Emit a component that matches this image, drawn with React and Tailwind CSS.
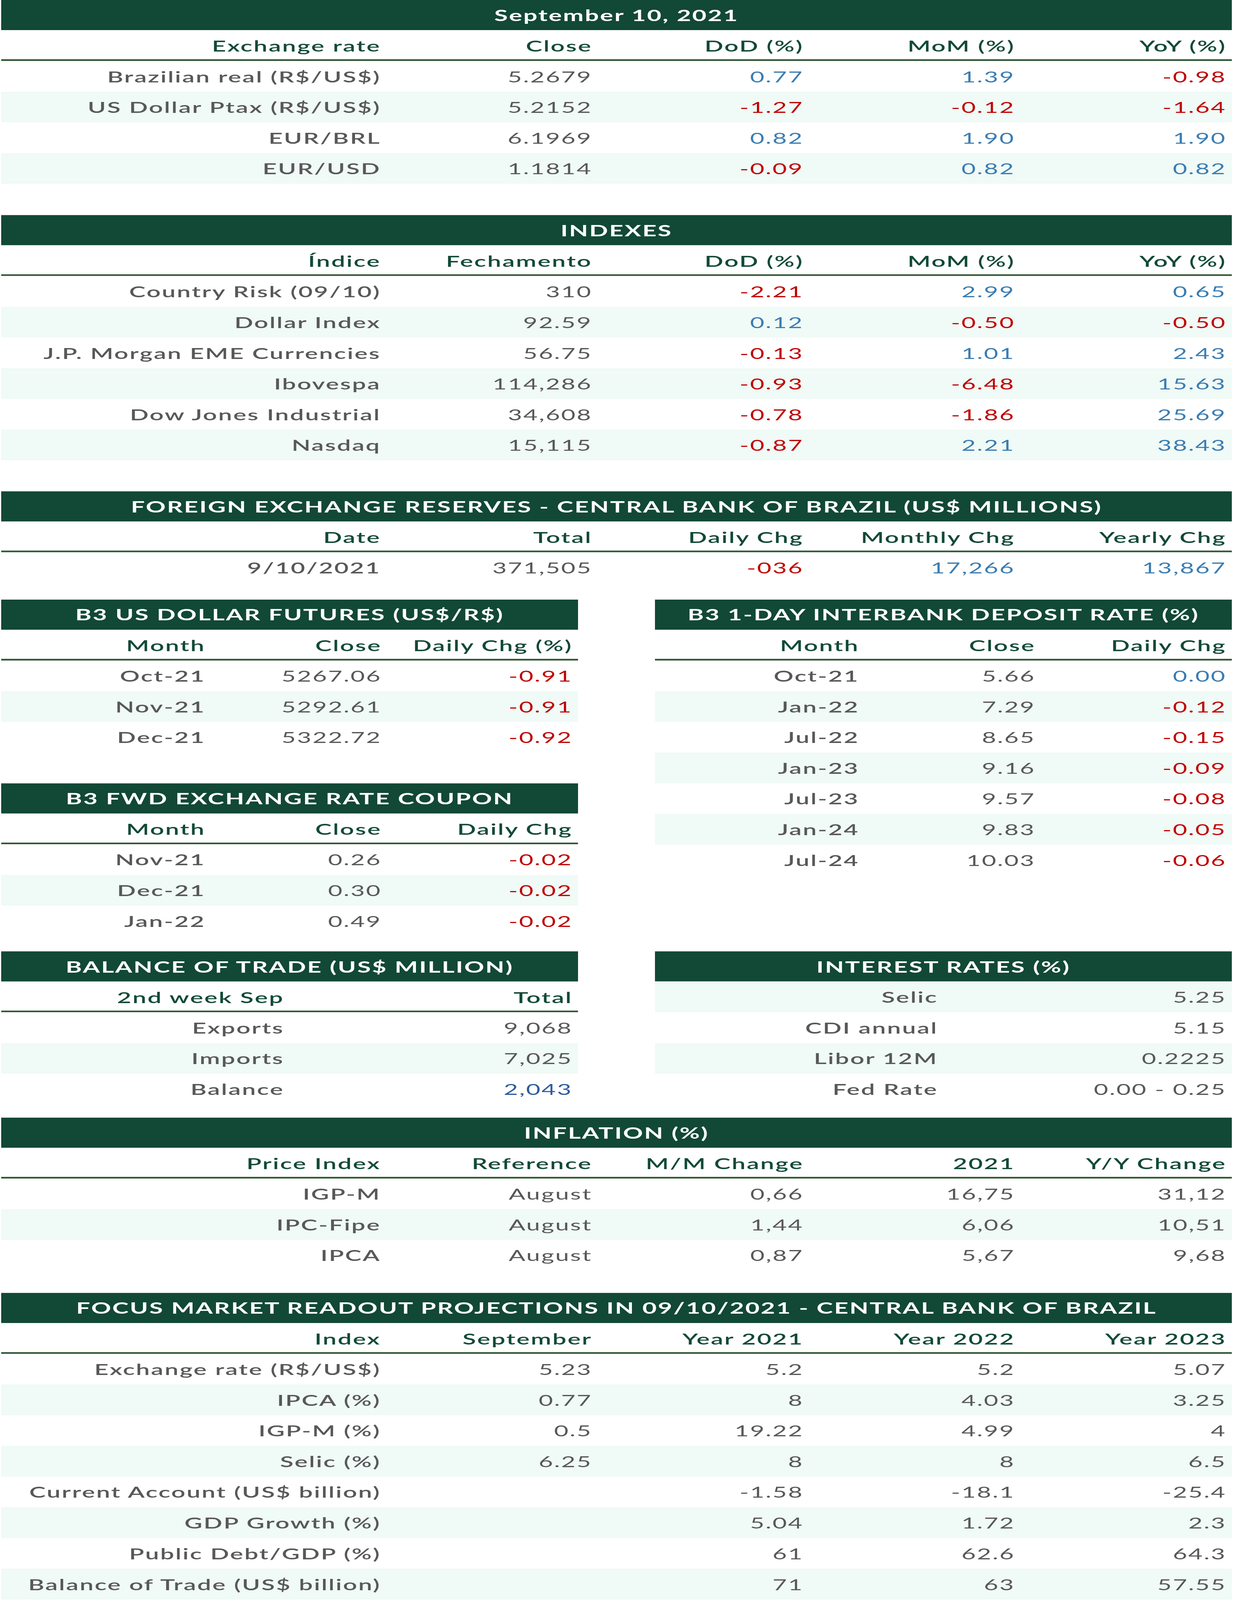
import React, { useEffect, useState } from 'react';

// the newsletter is drawn at this height
const PAGE_H = 6591;

// colours picked from the newsletter
const tones = {
  gray: 'text-[#58585a]',
  red: 'text-[#c00000]',
  blue: 'text-[#3b7db2]',
  navy: 'text-[#2f5c9c]',
};

const signTone = (v) => (v.trim().startsWith('-') ? 'red' : 'blue');

const Title = ({ children }) => (
  <div className="h-[124px] bg-[#124836] flex items-center justify-center text-white font-bold leading-none">
    {children}
  </div>
);

const Table = ({ title, cols, heads, rows, signed = [], className = '' }) => (
  <div className={className}>
    <Title>{title}</Title>
    {heads && (
      <div className={`grid ${cols} h-[127px] pt-[8px] border-b-[7px] border-[#2e5632]`}>
        {heads.map((h, i) => (
          <div key={i} className="flex items-center justify-end pr-[14px] font-semibold text-[#124a37] leading-none">
            {h}
          </div>
        ))}
      </div>
    )}
    {rows.map((row, r) => {
      // title row is row 1, header row 2, so even rows get the stripe
      const n = r + (heads ? 3 : 2);
      return (
        <div key={r} className={`grid ${cols} h-[126.5px] ${n % 2 === 0 ? 'bg-[#f0faf6]' : 'bg-white'}`}>
          {row.map((v, c) => {
            const tone = c === 0 ? 'gray' : typeof v === 'object' ? v.tone : signed.includes(c) && v ? signTone(v) : 'gray';
            const text = typeof v === 'object' ? v.v : v;
            return (
              <div
                key={c}
                className={`flex items-center justify-end pr-[14px] leading-none whitespace-nowrap ${tones[tone]} ${c === 0 ? 'font-semibold' : 'font-normal'}`}
              >
                {text}
              </div>
            );
          })}
        </div>
      );
    })}
  </div>
);

// keeps the whole sheet inside the window when the window is shorter than the sheet
const Fit = ({ children }) => {
  const [vh, setVh] = useState(PAGE_H);
  useEffect(() => {
    const update = () => setVh(window.innerHeight || PAGE_H);
    update();
    window.addEventListener('resize', update);
    return () => window.removeEventListener('resize', update);
  }, []);
  const s = Math.min(1, vh / PAGE_H);
  return (
    <div className="overflow-hidden" style={{ height: PAGE_H * s }}>
      <div className="origin-top" style={{ transform: `scaleY(${s})` }}>
        {children}
      </div>
    </div>
  );
};

const FIVE = 'grid-cols-[986px_1fr_1fr_1fr_1fr]';
const THREE = 'grid-cols-[537px_451px_1fr]';
const TWO = 'grid-cols-2';

export default function App() {
  return (
    <Fit>
      <div className="w-[3157px] h-[6591px] bg-white px-[3px] text-[63px] tracking-[0.05em] font-['Lato','Liberation_Sans',sans-serif]">
        <Table
          title="September 10, 2021"
          cols={FIVE}
          heads={['Exchange rate', 'Close', 'DoD (%)', 'MoM (%)', 'YoY (%)']}
          signed={[2, 3, 4]}
          rows={[
            ['Brazilian real (R$/US$)', '5.2679', '0.77', '1.39', '-0.98'],
            ['US Dollar Ptax (R$/US$)', '5.2152', '-1.27', '-0.12', '-1.64'],
            ['EUR/BRL', '6.1969', '0.82', '1.90', '1.90'],
            ['EUR/USD', '1.1814', '-0.09', '0.82', '0.82'],
          ]}
        />

        <Table
          className="mt-[129px]"
          title="INDEXES"
          cols={FIVE}
          heads={['Índice', 'Fechamento', 'DoD (%)', 'MoM (%)', 'YoY (%)']}
          signed={[2, 3, 4]}
          rows={[
            ['Country Risk (09/10)', '310', '-2.21', '2.99', '0.65'],
            ['Dollar Index', '92.59', '0.12', '-0.50', '-0.50'],
            ['J.P. Morgan EME Currencies', '56.75', '-0.13', '1.01', '2.43'],
            ['Ibovespa', '114,286', '-0.93', '-6.48', '15.63'],
            ['Dow Jones Industrial', '34,608', '-0.78', '-1.86', '25.69'],
            ['Nasdaq', '15,115', '-0.87', '2.21', '38.43'],
          ]}
        />

        <Table
          className="mt-[128px]"
          title="FOREIGN EXCHANGE RESERVES - CENTRAL BANK OF BRAZIL (US$ MILLIONS)"
          cols={FIVE}
          heads={['Date', 'Total', 'Daily Chg', 'Monthly Chg', 'Yearly Chg']}
          signed={[2, 3, 4]}
          rows={[['9/10/2021', '371,505', '-036', '17,266', '13,867']]}
        />

        <div className="mt-[68px] grid grid-cols-2 gap-x-[197px] gap-y-[62px] items-start">
          <div>
            <Table
              title="B3 US DOLLAR FUTURES (US$/R$)"
              cols={THREE}
              heads={['Month', 'Close', 'Daily Chg (%)']}
              signed={[2]}
              rows={[
                ['Oct-21', '5267.06', '-0.91'],
                ['Nov-21', '5292.61', '-0.91'],
                ['Dec-21', '5322.72', '-0.92'],
              ]}
            />
            <Table
              className="mt-[126.5px]"
              title="B3 FWD EXCHANGE RATE COUPON"
              cols={THREE}
              heads={['Month', 'Close', 'Daily Chg']}
              signed={[2]}
              rows={[
                ['Nov-21', '0.26', '-0.02'],
                ['Dec-21', '0.30', '-0.02'],
                ['Jan-22', '0.49', '-0.02'],
              ]}
            />
          </div>
          <Table
            title="B3 1-DAY INTERBANK DEPOSIT RATE (%)"
            cols={THREE}
            heads={['Month', 'Close', 'Daily Chg']}
            signed={[2]}
            rows={[
              ['Oct-21', '5.66', '0.00'],
              ['Jan-22', '7.29', '-0.12'],
              ['Jul-22', '8.65', '-0.15'],
              ['Jan-23', '9.16', '-0.09'],
              ['Jul-23', '9.57', '-0.08'],
              ['Jan-24', '9.83', '-0.05'],
              ['Jul-24', '10.03', '-0.06'],
            ]}
          />
          <Table
            title="BALANCE OF TRADE (US$ MILLION)"
            cols={TWO}
            heads={['2nd week Sep', 'Total']}
            rows={[
              ['Exports', '9,068'],
              ['Imports', '7,025'],
              ['Balance', { v: '2,043', tone: 'navy' }],
            ]}
          />
          <Table
            title="INTEREST RATES (%)"
            cols={TWO}
            rows={[
              ['Selic', '5.25'],
              ['CDI annual', '5.15'],
              ['Libor 12M', '0.2225'],
              ['Fed Rate', '0.00 - 0.25'],
            ]}
          />
        </div>

        <Table
          className="mt-[54px]"
          title="INFLATION (%)"
          cols={FIVE}
          heads={['Price Index', 'Reference', 'M/M Change', '2021', 'Y/Y Change']}
          rows={[
            ['IGP-M', 'August', '0,66', '16,75', '31,12'],
            ['IPC-Fipe', 'August', '1,44', '6,06', '10,51'],
            ['IPCA', 'August', '0,87', '5,67', '9,68'],
          ]}
        />

        <Table
          className="mt-[91.5px]"
          title="FOCUS MARKET READOUT PROJECTIONS IN 09/10/2021 - CENTRAL BANK OF BRAZIL"
          cols={FIVE}
          heads={['Index', 'September', 'Year 2021', 'Year 2022', 'Year 2023']}
          rows={[
            ['Exchange rate (R$/US$)', '5.23', '5.2', '5.2', '5.07'],
            ['IPCA (%)', '0.77', '8', '4.03', '3.25'],
            ['IGP-M (%)', '0.5', '19.22', '4.99', '4'],
            ['Selic (%)', '6.25', '8', '8', '6.5'],
            ['Current Account (US$ billion)', '', '-1.58', '-18.1', '-25.4'],
            ['GDP Growth (%)', '', '5.04', '1.72', '2.3'],
            ['Public Debt/GDP (%)', '', '61', '62.6', '64.3'],
            ['Balance of Trade (US$ billion)', '', '71', '63', '57.55'],
          ]}
        />
      </div>
    </Fit>
  );
}
